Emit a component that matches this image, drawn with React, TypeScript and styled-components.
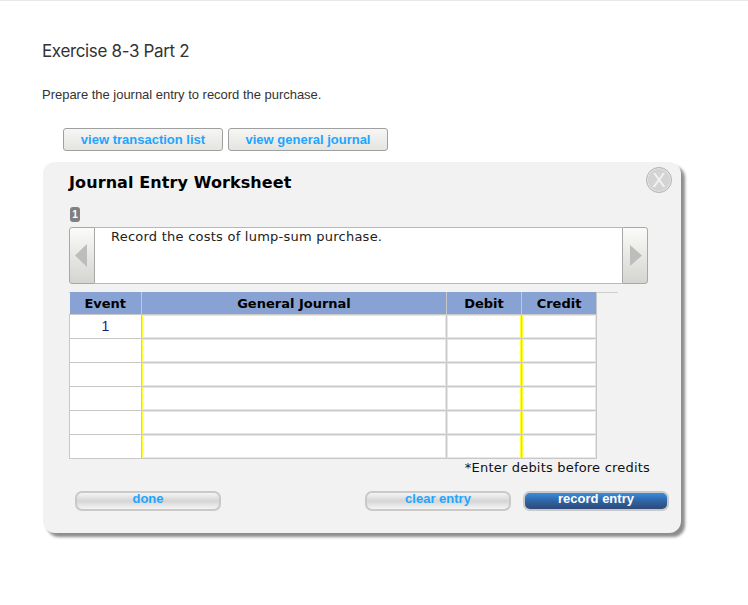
import { createGlobalStyle, styled } from "styled-components";

const Global = createGlobalStyle`
  html, body { margin: 0; padding: 0; background: #fff; }
  body { font-family: "Liberation Sans", Arial, sans-serif; color: #333; }
`;

const Page = styled.div`
  width: 748px;
  height: 605px;
  box-sizing: border-box;
  border-top: 1px solid #e8e8e8;
  padding: 40px 0 0 42px;
  overflow: hidden;
`;

const Heading = styled.h2`
  margin: 0;
  font: 400 17px/20px Inter, sans-serif;
  letter-spacing: -0.35px;
  color: #333;
`;

const Prompt = styled.p`
  margin: 26px 0 0;
  font-size: 13px;
  line-height: 16px;
  letter-spacing: -0.02px;
  color: #333;
`;

const ViewRow = styled.div`
  display: flex;
  gap: 5px;
  margin: 25px 0 0 21px;
`;

const ViewButton = styled.button`
  width: 160px;
  height: 23px;
  padding: 0;
  box-sizing: border-box;
  border: 1px solid #a0a0a0;
  border-radius: 3px;
  background: linear-gradient(#f6f6f4, #e4e4e1);
  color: #1fa5ff;
  font: 700 13px "Liberation Sans", Arial, sans-serif;
`;

const Panel = styled.section`
  position: relative;
  width: 638px;
  height: 371px;
  margin: 11px 0 0 1px;
  box-sizing: border-box;
  padding: 11px 0 0 26px;
  background: #f2f2f2;
  border-radius: 12px;
  box-shadow: 4px 4px 3px #8d8d8d;
`;

const Title = styled.h3`
  margin: 0;
  font: 700 16px/20px "DejaVu Sans", Verdana, sans-serif;
  letter-spacing: 0.1px;
  color: #000;
`;

const Close = styled.button`
  position: absolute;
  top: 5px;
  right: 9px;
  width: 26px;
  height: 26px;
  padding: 0;
  box-sizing: border-box;
  border: 1px solid #b5b5b5;
  border-radius: 50%;
  background: #d3d3d3;
  box-shadow: inset 0 0 0 1px #e6e6e6;
  color: #f4f4f4;
  font: 400 20px/22px "Liberation Sans", Arial, sans-serif;
`;

const Badge = styled.div`
  width: 10px;
  height: 15px;
  margin: 14px 0 0 1px;
  border-radius: 3px;
  background: #808080;
  color: #fff;
  font: 700 10px/15px "Liberation Sans", Arial, sans-serif;
  text-align: center;
`;

const Slider = styled.div`
  display: flex;
  width: 579px;
  height: 57px;
  margin-top: 5px;
`;

const Arrow = styled.div<{ $side: "left" | "right" }>`
  flex: none;
  display: flex;
  align-items: center;
  justify-content: center;
  width: 26px;
  box-sizing: border-box;
  padding: ${(p) => (p.$side === "left" ? "0 2px 0 0" : "0 0 0 2px")};
  border: 1px solid #a8a8a8;
  border-radius: ${(p) => (p.$side === "left" ? "3px 0 0 3px" : "0 3px 3px 0")};
  background: linear-gradient(#fbfbf9, #d4d4d0);
`;

const Statement = styled.div`
  flex: 1;
  box-sizing: border-box;
  padding: 1px 0 0 16px;
  background: #fff;
  border-top: 1px solid #b8b8b8;
  border-bottom: 1px solid #b8b8b8;
  font: 400 13px/16px "DejaVu Sans", Verdana, sans-serif;
  letter-spacing: 0.24px;
  color: #222;
`;

const TableWrap = styled.div`
  width: 549px;
  margin-top: 8px;
  border-top: 1px solid #cfcfcf;
`;

const Grid = styled.table`
  width: 528px;
  margin-top: -1px;
  border-collapse: collapse;
  table-layout: fixed;
`;

const HeadCell = styled.th<{ $w: number }>`
  width: ${(p) => p.$w}px;
  height: 22px;
  padding: 2px 0 0;
  box-sizing: border-box;
  background: #88a2d3;
  border-right: 1px solid #c8c8c8;
  font: 700 13px "DejaVu Sans", Verdana, sans-serif;
  color: #000;
`;

const EventCell = styled.td`
  height: 24px;
  padding: 0;
  box-sizing: border-box;
  background: #fff;
  border: 1px solid #c8c8c8;
  text-align: center;
  font: 400 14px "Liberation Sans", Arial, sans-serif;
  color: #1a1a80;
`;

const InputCell = styled.td`
  height: 24px;
  padding: 0;
  box-sizing: border-box;
  background: #fff;
  border: 1px solid #c8c8c8;
`;

const Field = styled.div`
  height: 23px;
  box-sizing: border-box;
  border: 1px solid #ffff30;
`;

const Note = styled.div`
  width: 581px;
  margin-top: 1px;
  text-align: right;
  font: 400 13px/16px "DejaVu Sans", Verdana, sans-serif;
  letter-spacing: 0.2px;
  color: #111;
`;

const Actions = styled.div`
  display: flex;
  width: 594px;
  margin: 15px 0 0 6px;
`;

const ActionButton = styled.button<{ $primary?: boolean }>`
  width: 146px;
  height: 20px;
  padding: 0 0 3px;
  box-sizing: border-box;
  border: 2px solid #c9c9c9;
  border-radius: 7px;
  background: ${(p) =>
    p.$primary
      ? "linear-gradient(#3a8cde, #2e64a4 50%, #2e4a78)"
      : "linear-gradient(#f5f5f5, #d5d5d5 50%, #f5f5f5)"};
  color: ${(p) => (p.$primary ? "#fff" : "#1fa5ff")};
  font: 700 13px/12px "Liberation Sans", Arial, sans-serif;
  & + & { margin-left: 12px; }
  &:first-child { margin-right: auto; }
`;

const columns = [
  { label: "Event", w: 72 },
  { label: "General Journal", w: 305 },
  { label: "Debit", w: 75 },
  { label: "Credit", w: 75 },
];

const rows = ["1", "", "", "", "", ""];

function Triangle({ side }: { side: "left" | "right" }) {
  const points = side === "left" ? "12,0 12,23 0,11.5" : "0,1 0,22 12,11.5";
  return (
    <svg width="12" height="23" viewBox="0 0 12 23">
      <polygon points={points} fill="#bdbdbd" />
    </svg>
  );
}

export default function App() {
  return (
    <Page>
      <Global />
      <Heading>Exercise 8-3 Part 2</Heading>
      <Prompt>Prepare the journal entry to record the purchase.</Prompt>
      <ViewRow>
        <ViewButton>view transaction list</ViewButton>
        <ViewButton>view general journal</ViewButton>
      </ViewRow>
      <Panel>
        <Title>Journal Entry Worksheet</Title>
        <Close>X</Close>
        <Badge>1</Badge>
        <Slider>
          <Arrow $side="left"><Triangle side="left" /></Arrow>
          <Statement>Record the costs of lump-sum purchase.</Statement>
          <Arrow $side="right"><Triangle side="right" /></Arrow>
        </Slider>
        <TableWrap>
          <Grid>
            <thead>
              <tr>
                {columns.map((c) => (
                  <HeadCell key={c.label} $w={c.w}>{c.label}</HeadCell>
                ))}
              </tr>
            </thead>
            <tbody>
              {rows.map((r, i) => (
                <tr key={i}>
                  <EventCell>{r}</EventCell>
                  <InputCell><Field /></InputCell>
                  <InputCell><Field /></InputCell>
                  <InputCell><Field /></InputCell>
                </tr>
              ))}
            </tbody>
          </Grid>
        </TableWrap>
        <Note>*Enter debits before credits</Note>
        <Actions>
          <ActionButton>done</ActionButton>
          <ActionButton>clear entry</ActionButton>
          <ActionButton $primary>record entry</ActionButton>
        </Actions>
      </Panel>
    </Page>
  );
}
